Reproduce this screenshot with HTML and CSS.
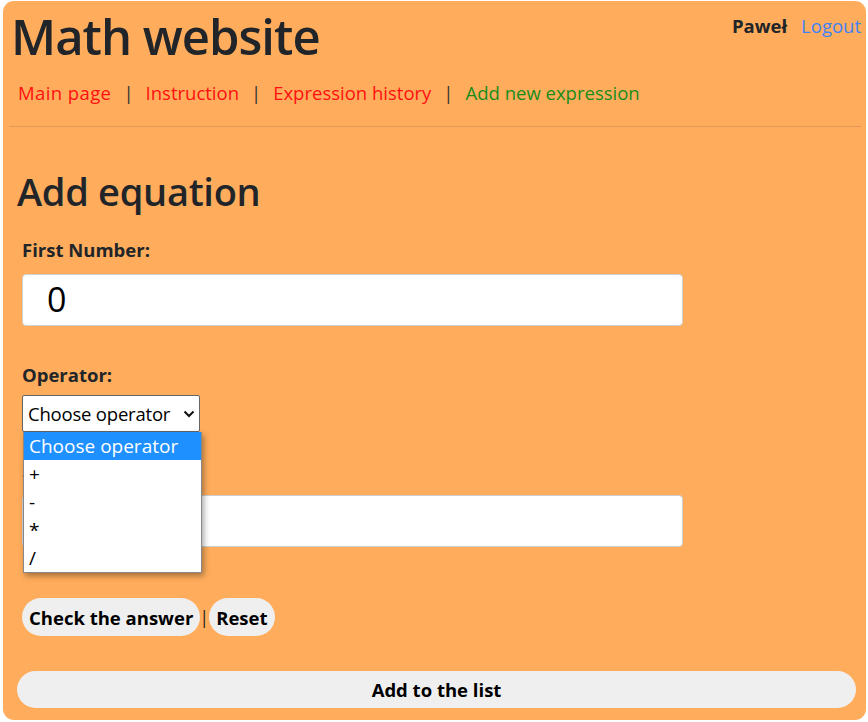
FILE: index.html
```html
<!DOCTYPE html>
<html lang="en">
<head>
<meta charset="utf-8">
<title>Math website</title>
<link rel="stylesheet" href="styles.css">
</head>
<body>
<div class="card">
  <header class="top">
    <h1 class="title">Math website</h1>
    <div class="user"><span class="user-name">Paweł</span><a class="logout" href="#">Logout</a></div>
  </header>
  <nav class="nav">
    <a class="nav-link red" href="#">Main page</a><span class="sep">|</span>
    <a class="nav-link red" href="#">Instruction</a><span class="sep">|</span>
    <a class="nav-link red" href="#">Expression history</a><span class="sep">|</span>
    <a class="nav-link green" href="#">Add new expression</a>
  </nav>
  <hr class="rule">
  <main class="content">
    <h2 class="heading">Add equation</h2>
    <div class="field field-first">
      <label class="label">First Number:</label>
      <div class="input big">0</div>
    </div>
    <div class="field field-op">
      <label class="label">Operator:</label>
      <div class="select-wrap">
        <div class="select">
          <span class="select-text">Choose operator</span>
          <svg class="chev" width="12" height="8" viewBox="0 0 12 8"><path d="M1.5 1.5 L6 6 L10.5 1.5" fill="none" stroke="#111" stroke-width="2"/></svg>
        </div>
        <ul class="options">
          <li class="opt active">Choose operator</li>
          <li class="opt">+</li>
          <li class="opt">-</li>
          <li class="opt">*</li>
          <li class="opt">/</li>
        </ul>
      </div>
    </div>
    <div class="field field-second">
      <label class="label">Second Number:</label>
      <div class="input big"></div>
    </div>
    <div class="actions">
      <button class="btn" type="button">Check the answer</button><span class="bar">|</span><button class="btn" type="button">Reset</button>
    </div>
    <button class="btn btn-wide" type="button">Add to the list</button>
  </main>
</div>
</body>
</html>
```
FILE: styles.css
```css
html, body {
  margin: 0;
  padding: 0;
  background: #ffffff;
}
body {
  font-family: "Open Sans", "Noto Sans", sans-serif;
  color: #212529;
}
.card {
  margin: 1px 2px 2px 3px;
  height: 719px;
  box-sizing: border-box;
  background: #ffad5c;
  border-radius: 11px;
  padding: 0 5px 0 6px;
  display: flex;
  flex-direction: column;
}
.top {
  display: flex;
  justify-content: space-between;
  align-items: flex-start;
}
.title {
  margin: 6px 0 0 2px;
  font-size: 49px;
  font-weight: 600;
  line-height: 1.2;
  letter-spacing: -1px;
}
.user {
  margin-top: 12px;
  font-size: 18.5px;
  display: flex;
  gap: 14px;
}
.user-name {
  font-weight: 700;
}
.logout {
  color: #3f82f5;
  text-decoration: none;
}
.nav {
  display: flex;
  align-items: baseline;
  margin: 14px 0 0 9px;
  font-size: 18.5px;
}
.nav-link {
  text-decoration: none;
}
.red { color: #ff1010; }
.green { color: #1a8c1a; }
.nav-link:first-child { letter-spacing: 0.4px; }
.sep {
  margin: 0 12px;
  color: #333;
}
.rule {
  border: 0;
  border-top: 1px solid #e3975a;
  margin: 21px 0 0 0;
  width: 852px;
}
.content {
  padding: 0 0 0 8px;
  display: flex;
  flex-direction: column;
}
.heading {
  margin: 42px 0 0 0;
  font-size: 38px;
  font-weight: 600;
  line-height: 1.2;
  letter-spacing: -0.3px;
}
.field {
  display: flex;
  flex-direction: column;
  padding-left: 5px;
}
.label {
  font-weight: 700;
  font-size: 18.5px;
  margin: 24px 0 12px;
  line-height: 24px;
}
.field-op .label { margin: 37px 0 8px; }
.field-second .label { margin-top: 27px; }
.input {
  width: 661px;
  height: 52px;
  box-sizing: border-box;
  background: #fff;
  border: 1px solid #cfcfcf;
  border-radius: 4px;
  font-size: 34px;
  line-height: 48px;
  padding-left: 24px;
  color: #000;
}
.select-wrap {
  position: relative;
  width: 178px;
}
.select {
  height: 37px;
  box-sizing: border-box;
  border: 1px solid #666;
  border-radius: 2px;
  background: #fff;
  display: flex;
  align-items: center;
  justify-content: space-between;
  padding: 0 4px 0 5px;
  font-size: 18.5px;
  color: #000;
  white-space: nowrap;
}
.select-text {
  letter-spacing: -0.2px;
}
.chev { margin-left: 2px; flex: none; }
.options {
  position: absolute;
  left: 1px;
  top: 37px;
  width: 177px;
  margin: 0;
  padding: 0;
  list-style: none;
  background: #fff;
  border: 1px solid #888;
  border-top: 0;
  box-shadow: 2px 3px 6px rgba(0,0,0,0.35);
  z-index: 5;
}
.opt {
  height: 28px;
  line-height: 28px;
  padding-left: 5px;
  font-size: 19px;
  color: #000;
  white-space: nowrap;
}
.opt.active {
  background: #1e90ff;
  color: #fff;
}
.actions {
  display: flex;
  align-items: center;
  margin: 51px 0 0 5px;
}
.btn {
  font-family: inherit;
  font-weight: 700;
  font-size: 18.5px;
  color: #000;
  background: #efefef;
  border: 0;
  border-radius: 19px;
  height: 38px;
  padding: 0 7px;
}
.bar {
  margin: 0 0 0 -1px;
  font-size: 18px;
  color: #222;
}
.btn-wide {
  margin-top: 35px;
  width: 839px;
  height: 37px;
}
```
